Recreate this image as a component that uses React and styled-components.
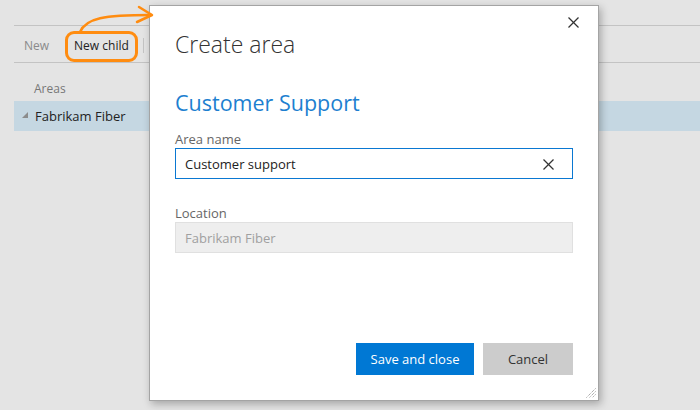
import React from 'react'
import styled, { createGlobalStyle } from 'styled-components'

const GlobalStyle = createGlobalStyle`
    body {
        margin: 0;
        background: #e4e4e4;
        font-family: "Segoe UI", "Open Sans", sans-serif;
    }
`;

const Page = styled.div`
    position: relative;
    width: 700px;
    height: 410px;
    overflow: hidden;
    padding: 25px 0 0 14px;
    box-sizing: border-box;
`;

const Toolbar = styled.div`
    display: flex;
    align-items: center;
    height: 38px;
    box-sizing: border-box;
    padding: 3px 0 0 10px;
    border-top: 1px solid #c3c3c3;
    border-bottom: 1px solid #c3c3c3;
    font-size: 12px;
    line-height: 16px;
`;

const ToolButton = styled.div`
    position: relative;
    color: ${p => (p.disabled ? '#8a8a8a' : '#222')};
    margin-right: ${p => p.gap || 0}px;
`;

const Ring = styled.div`
    position: absolute;
    left: -9px;
    right: -9px;
    top: -7px;
    bottom: -8px;
    border: 3px solid #ff8c10;
    border-radius: 9px;
`;

const Separator = styled.div`
    width: 1px;
    height: 15px;
    background: #c4c4c4;
    margin-left: 14px;
`;

const ColumnHeader = styled.div`
    padding: 18px 0 4px 20px;
    font-size: 12px;
    line-height: 16px;
    color: #777;
`;

const TreeRow = styled.div`
    display: flex;
    align-items: center;
    height: 30px;
    background: #c5d7e2;
    font-size: 13px;
    color: #222;
`;

const Expander = styled.svg`
    width: 6px;
    height: 6px;
    margin: 0 7px 3px 8px;
`;

const Callout = styled.svg`
    position: absolute;
    left: 0;
    top: 0;
    z-index: 3;
    overflow: visible;
`;

const Dialog = styled.div`
    position: absolute;
    left: 149px;
    top: 5px;
    width: 450px;
    height: 396px;
    box-sizing: border-box;
    background: #fff;
    border: 1px solid #a4a4a4;
    box-shadow: 2px 3px 8px rgba(0, 0, 0, 0.28);
    display: flex;
    flex-direction: column;
    padding: 0 25px 0 25px;
    z-index: 2;
`;

const CloseButton = styled.svg`
    position: absolute;
    top: 11px;
    right: 19px;
    width: 11px;
    height: 11px;
`;

const Title = styled.h1`
    margin: 22px 0 0;
    font-size: 23px;
    font-weight: 300;
    line-height: 32px;
    color: #333;
`;

const Subtitle = styled.h2`
    margin: 27px 0 0;
    font-size: 21.5px;
    font-weight: 400;
    line-height: 32px;
    color: #1d7fd0;
`;

const Label = styled.div`
    margin-top: ${p => p.top}px;
    font-size: 13px;
    line-height: 18px;
    color: #666;
`;

const Field = styled.div`
    display: flex;
    align-items: center;
    height: 31px;
    box-sizing: border-box;
    padding: 1px 18px 0 9px;
    font-size: 13px;
    border: 1px solid ${p => (p.disabled ? '#e0e0e0' : '#0a78d2')};
    background: ${p => (p.disabled ? '#eeeeee' : '#fff')};
    color: ${p => (p.disabled ? '#a0a0a0' : '#222')};
`;

const FieldText = styled.span`
    flex: 1;
`;

const ClearIcon = styled.svg`
    width: 11px;
    height: 11px;
`;

const Footer = styled.div`
    margin-top: auto;
    margin-bottom: 25px;
    display: flex;
    justify-content: flex-end;
    gap: 9px;
`;

const Button = styled.button`
    height: 32px;
    border: none;
    padding: 0;
    width: ${p => p.w}px;
    font-family: inherit;
    font-size: 13px;
    background: ${p => (p.primary ? '#0078d4' : '#cccccc')};
    color: ${p => (p.primary ? '#fff' : '#333')};
`;

const Grip = styled.svg`
    position: absolute;
    right: 2px;
    bottom: 2px;
    width: 10px;
    height: 10px;
`;

const Cross = ({ color = '#333' }) => (
    <g stroke={color} strokeWidth="1.2">
        <line x1="0.5" y1="0.5" x2="10.5" y2="10.5" />
        <line x1="10.5" y1="0.5" x2="0.5" y2="10.5" />
    </g>
);

const App = () => {
    return (
        <Page>
            <GlobalStyle />
            <Toolbar>
                <ToolButton disabled gap={25}>New</ToolButton>
                <ToolButton>
                    New child
                    <Ring />
                </ToolButton>
                <Separator />
            </Toolbar>
            <ColumnHeader>Areas</ColumnHeader>
            <TreeRow>
                <Expander viewBox="0 0 6 6">
                    <polygon points="6,0 6,6 0,6" fill="#8c8c8c" />
                </Expander>
                Fabrikam Fiber
            </TreeRow>

            <Callout width="160" height="40" viewBox="0 0 160 40">
                <g fill="none" stroke="#ff8c10" strokeWidth="2.5" strokeLinecap="round" strokeLinejoin="round">
                    <path d="M80 32 C86 18 104 15 151 15" />
                    <path d="M139 7 L152 15 L137 22" />
                </g>
            </Callout>

            <Dialog>
                <CloseButton viewBox="0 0 11 11">
                    <Cross />
                </CloseButton>
                <Title>Create area</Title>
                <Subtitle>Customer Support</Subtitle>
                <Label top={11}>Area name</Label>
                <Field>
                    <FieldText>Customer support</FieldText>
                    <ClearIcon viewBox="0 0 11 11">
                        <Cross />
                    </ClearIcon>
                </Field>
                <Label top={25}>Location</Label>
                <Field disabled>
                    <FieldText>Fabrikam Fiber</FieldText>
                </Field>
                <Footer>
                    <Button primary w={118}>Save and close</Button>
                    <Button w={90}>Cancel</Button>
                </Footer>
                <Grip viewBox="0 0 10 10">
                    <g stroke="#888" strokeWidth="1" strokeDasharray="1 1">
                        <line x1="9.5" y1="0.5" x2="0.5" y2="9.5" />
                        <line x1="9.5" y1="3.5" x2="3.5" y2="9.5" />
                        <line x1="9.5" y1="6.5" x2="6.5" y2="9.5" />
                    </g>
                </Grip>
            </Dialog>
        </Page>
    )
}

export default App
